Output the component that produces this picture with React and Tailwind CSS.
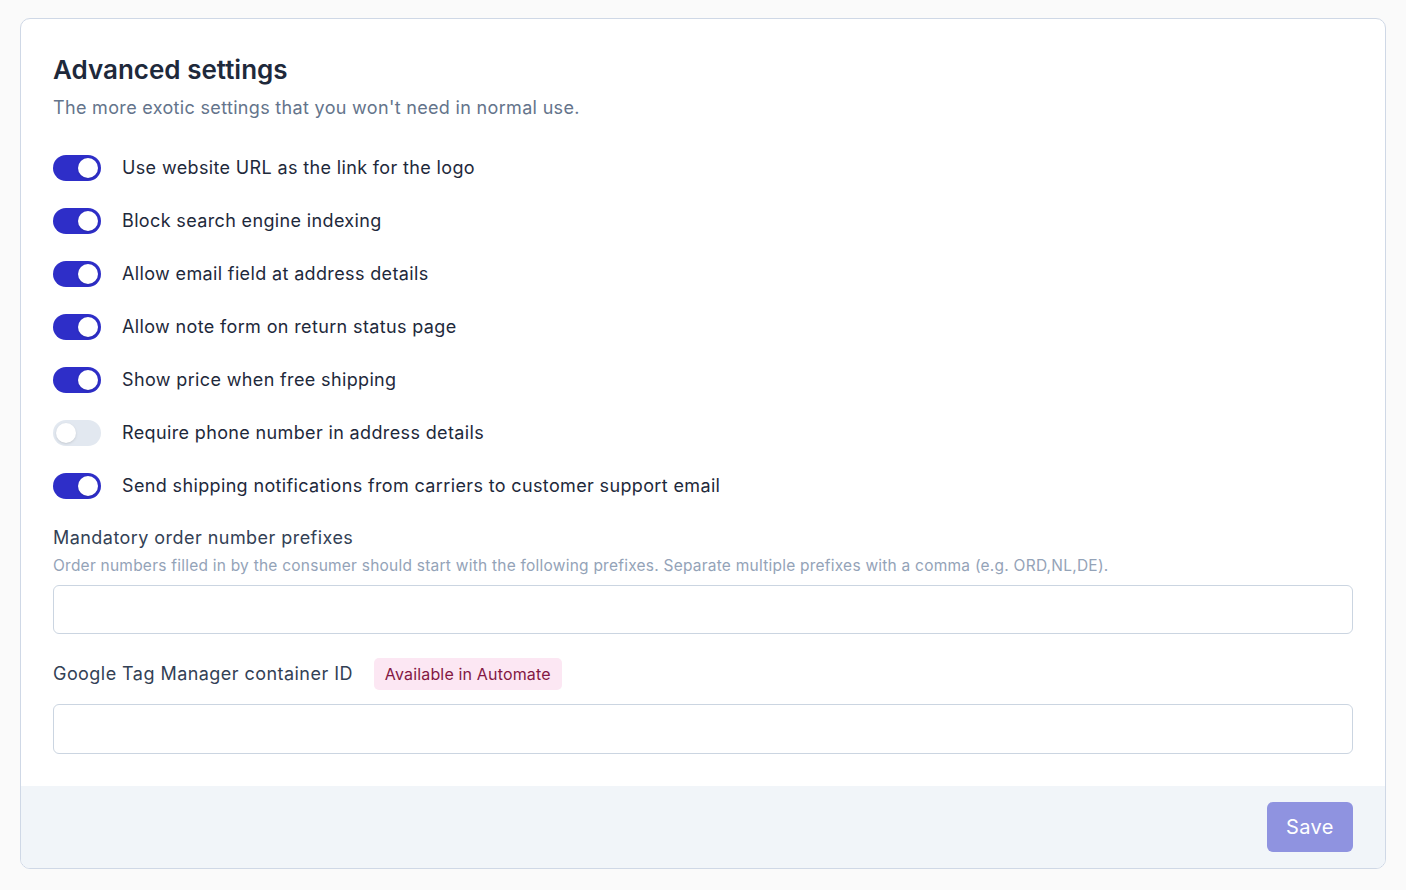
import React from "react";

const toggles = [
  ["Use website URL as the link for the logo", true],
  ["Block search engine indexing", true],
  ["Allow email field at address details", true],
  ["Allow note form on return status page", true],
  ["Show price when free shipping", true],
  ["Require phone number in address details", false],
  ["Send shipping notifications from carriers to customer support email", true],
];

function Toggle({ on }) {
  return (
    <div
      className={
        "flex h-[26px] w-[48px] shrink-0 items-center rounded-full p-[3px] " +
        (on ? "justify-end bg-[#2e2ec8]" : "justify-start bg-[#e2e8f0]")
      }
    >
      <div className="h-[20px] w-[20px] rounded-full bg-white shadow-sm" />
    </div>
  );
}

export default function App() {
  return (
    <div
      className="min-h-[890px] bg-[#fafafa] px-[20px] pt-[18px] pb-[21px]"
      style={{ fontFamily: "Inter, 'Noto Sans', sans-serif" }}
    >
      <div className="overflow-hidden rounded-[10px] border border-[#cfd8e6] bg-white">
        <div className="px-[32px] pt-[35px] pb-[32px]">
          <h2 className="text-[26px] leading-[32px] font-semibold text-[#1e293b]">
            Advanced settings
          </h2>
          <p className="mt-[8px] text-[18px] leading-[28px] tracking-[0.018em] text-[#64748b]">
            The more exotic settings that you won't need in normal use.
          </p>
          <div className="mt-[33px] flex flex-col gap-[27px]">
            {toggles.map(([label, on]) => (
              <div key={label} className="flex items-center gap-[21px]">
                <Toggle on={on} />
                <span className="text-[18px] leading-[26px] tracking-[0.02em] text-[#1e293b]">{label}</span>
              </div>
            ))}
          </div>
          <div className="mt-[25px]">
            <div className="text-[18px] leading-[28px] tracking-[0.025em] text-[#334155]">
              Mandatory order number prefixes
            </div>
            <div className="mt-[3px] text-[15.5px] leading-[22px] tracking-[0.015em] text-[#94a3b8]">
              Order numbers filled in by the consumer should start with the following prefixes. Separate multiple prefixes with a comma (e.g. ORD,NL,DE).
            </div>
            <input
              className="mt-[8px] block h-[49px] w-full rounded-[6px] border border-[#cbd5e1] bg-white px-3 outline-none"
              type="text"
            />
          </div>
          <div className="mt-[24px]">
            <div className="flex items-center gap-[21px]">
              <span className="text-[18px] leading-[28px] tracking-[0.025em] text-[#334155]">
                Google Tag Manager container ID
              </span>
              <span className="flex h-[32px] items-center rounded-[5px] bg-[#fce7f3] px-[11px] text-[16px] tracking-[0.01em] text-[#831843]">
                Available in Automate
              </span>
            </div>
            <input
              className="mt-[14px] block h-[50px] w-full rounded-[6px] border border-[#cbd5e1] bg-white px-3 outline-none"
              type="text"
            />
          </div>
        </div>
        <div className="flex justify-end bg-[#f1f5f9] px-[32px] py-[16px]">
          <button className="h-[50px] w-[86px] rounded-[6px] bg-[#8f93e0] text-[20px] tracking-[0.02em] text-white">
            Save
          </button>
        </div>
      </div>
    </div>
  );
}
